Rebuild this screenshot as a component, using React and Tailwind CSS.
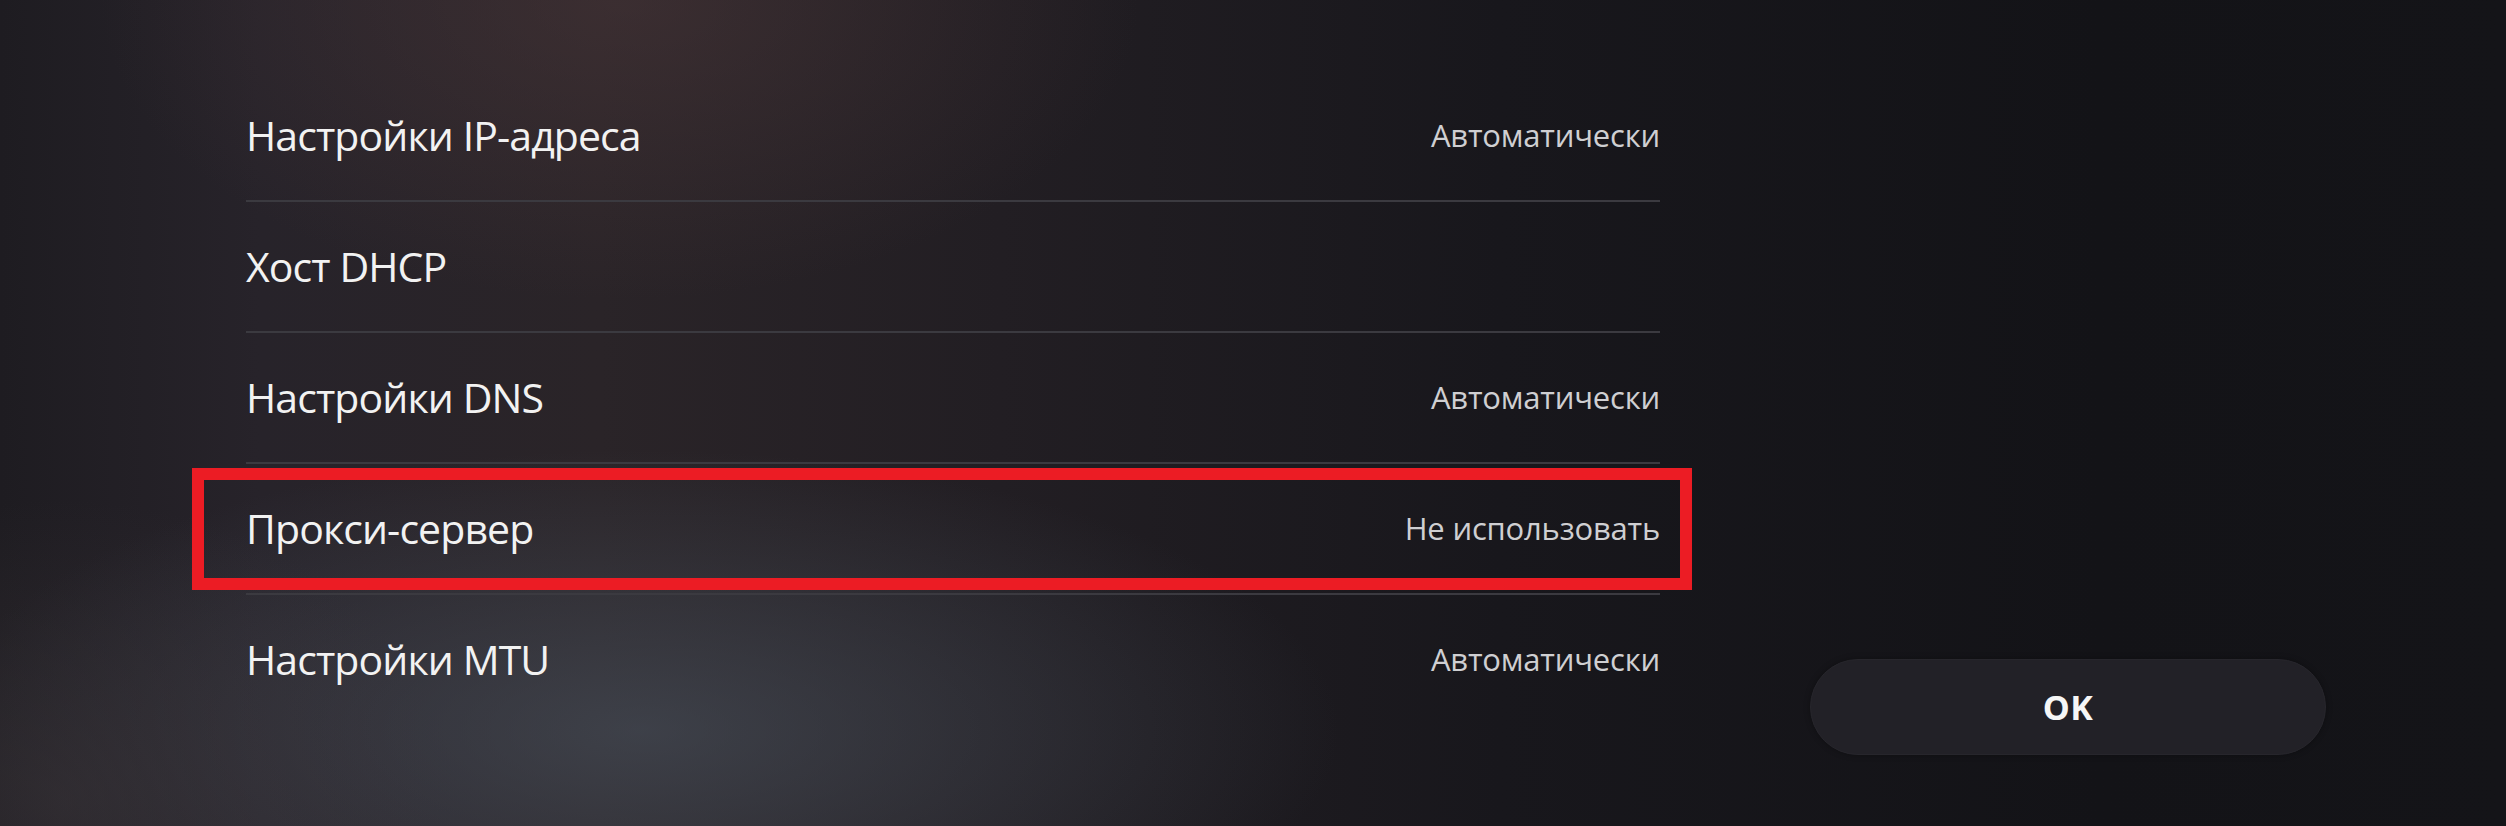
import React from "react";

const rows = [
  { label: "Настройки IP-адреса", value: "Автоматически" },
  { label: "Хост DHCP", value: "" },
  { label: "Настройки DNS", value: "Автоматически" },
  { label: "Прокси-сервер", value: "Не использовать", marked: true },
  { label: "Настройки MTU", value: "Автоматически", last: true },
];

export default function App() {
  return (
    <div
      className="relative w-[2506px] h-[826px] overflow-hidden bg-[#17161b] [font-family:'Open_Sans','Noto_Sans',sans-serif]"
    >
      {/* background layers */}
      <div className="absolute inset-0 bg-[linear-gradient(to_right,#1e1c21_0px,#27232a_260px,#2a2428_600px,#221e23_1000px,#18171c_1500px,#131317_2100px,#141418_2506px)]" />
      <div className="absolute inset-0 bg-[radial-gradient(ellipse_700px_280px_at_640px_730px,rgba(78,88,100,0.55),rgba(78,88,100,0)_100%)]" />
      <div className="absolute inset-0 bg-[radial-gradient(ellipse_520px_300px_at_620px_0px,rgba(80,58,60,0.45),rgba(80,58,60,0)_100%)]" />
      <div className="absolute inset-0 bg-[radial-gradient(ellipse_400px_300px_at_60px_800px,rgba(60,54,58,0.5),rgba(60,54,58,0)_100%)]" />

      <div className="relative flex pl-[246px] pt-[71px]">
        <div className="w-[1414px] flex flex-col">
          {rows.map((r) => (
            <div
              key={r.label}
              className={
                "relative flex items-center justify-between " +
                (r.last ? "h-[129px]" : "h-[131px] border-b-2 border-[#3b3a40]")
              }
            >
              <span className="text-[41px] leading-none text-[#f2f2f2] tracking-[-0.9px]">
                {r.label}
              </span>
              <span className="text-[31px] leading-none text-[#cfcfd2] tracking-[-0.2px]">
                {r.value}
              </span>
              {r.marked && (
                <div className="absolute left-[-54px] top-[4px] w-[1500px] h-[122px] border-[12px] border-[#ec1c24]" />
              )}
            </div>
          ))}
        </div>

        <div className="ml-[150px] pt-[588px]">
          <button className="w-[516px] h-[96px] rounded-full bg-[#222127] border border-[#27262c] shadow-[0_0_6px_rgba(0,0,0,0.3)] flex items-center justify-center">
            <span className="text-[34px] font-bold text-[#f6f6f6] leading-none tracking-[0.5px]">OK</span>
          </button>
        </div>
      </div>
    </div>
  );
}
